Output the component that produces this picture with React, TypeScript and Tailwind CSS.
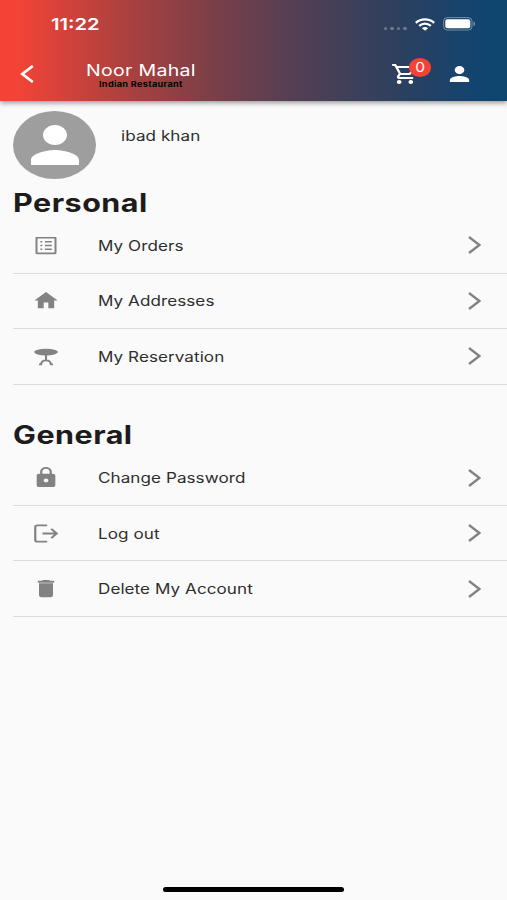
import type { ReactNode } from "react";

const PERSON =
    "M12 12c2.21 0 4-1.79 4-4s-1.79-4-4-4-4 1.79-4 4 1.79 4 4 4zm0 2c-2.67 0-8 1.34-8 4v2h16v-2c0-2.66-5.33-4-8-4z";

const PERSONAL = [
    {
        label: "My Orders",
        icon: (
            <path d="M19.3 4.7v14.6H4.7V4.7h14.6m.8-1.7H3.9c-.5 0-.9.4-.9.9v16.2c0 .4.4.9.9.9h16.2c.4 0 .9-.5.9-.9V3.9c0-.5-.5-.9-.9-.9zM11 7.2h6v1.6h-6zm0 4h6v1.6h-6zm0 4h6v1.6h-6zM7.2 7.2h1.6v1.6H7.2zm0 4h1.6v1.6H7.2zm0 4h1.6v1.6H7.2z" />
        ),
    },
    {
        label: "My Addresses",
        icon: <path d="M10 20v-6h4v6h5v-8h3L12 3 2 12h3v8z" />,
    },
    {
        label: "My Reservation",
        icon: (
            <>
                <ellipse cx="12" cy="7.4" rx="10.2" ry="3.5" />
                <path
                    d="M12 10v6M6 20.2h1.8c.2-2.5 1-4.2 4.2-4.2s4 1.7 4.2 4.2H18"
                    fill="none"
                    stroke="currentColor"
                    strokeWidth="1.8"
                />
            </>
        ),
    },
];

const GENERAL = [
    {
        label: "Change Password",
        icon: (
            <path d="M18 8h-1V6c0-2.76-2.24-5-5-5S7 3.24 7 6v2H6c-1.1 0-2 .9-2 2v10c0 1.1.9 2 2 2h12c1.1 0 2-.9 2-2V10c0-1.1-.9-2-2-2zm-6 9c-1.1 0-2-.9-2-2s.9-2 2-2 2 .9 2 2-.9 2-2 2zm3.1-9H8.9V6c0-1.71 1.39-3.1 3.1-3.1 1.71 0 3.1 1.39 3.1 3.1v2z" />
        ),
    },
    {
        label: "Log out",
        icon: (
            <path
                d="M13 3.5H4.5c-1 0-1.7.7-1.7 1.7v13.6c0 1 .7 1.7 1.7 1.7H13M9 12h12.5M16.5 7.2l4.7 4.8-4.7 4.8"
                fill="none"
                stroke="currentColor"
                strokeWidth="1.9"
            />
        ),
    },
    {
        label: "Delete My Account",
        icon: (
            <path d="M6 19c0 1.1.9 2 2 2h8c1.1 0 2-.9 2-2V6.5H6V19zM19 4h-3.5l-1-1h-5l-1 1H5v2h14V4z" />
        ),
    },
];

type Item = (typeof PERSONAL)[number];

function Wide({ className, children }: { className: string; children: ReactNode }) {
    return (
        <span className={`block w-max origin-left scale-x-[1.22] whitespace-nowrap ${className}`}>
            {children}
        </span>
    );
}

function Icon({ className, children }: { className: string; children: ReactNode }) {
    return (
        <svg
            viewBox="0 0 24 24"
            preserveAspectRatio="none"
            fill="currentColor"
            className={`shrink-0 ${className}`}
        >
            {children}
        </svg>
    );
}

function Row({ item }: { item: Item }) {
    return (
        <li className="ml-[13px] flex h-[55.5px] items-center border-b border-[#dcdcdc] pl-[19px] pr-[26px]">
            <Icon className="h-[23px] w-7 text-[#828282]">{item.icon}</Icon>
            <div className="ml-[38px] flex-1 pt-[0.8px]">
                <Wide className="text-sm tracking-[0.05px] text-[#2e2e2e]">{item.label}</Wide>
            </div>
            <svg viewBox="0 0 13 18" className="h-[18px] w-[13px] text-[#828282]">
                <path d="M1 1l10.4 8L1 17" fill="none" stroke="currentColor" strokeWidth="2.3" />
            </svg>
        </li>
    );
}

function Section({ title, items }: { title: string; items: Item[] }) {
    return (
        <section>
            <h2 className="flex h-[31px] items-end pl-[13px]">
                <Wide className="text-[25px] leading-[29px] font-bold tracking-[0.4px] text-[#1c1c1c]">
                    {title}
                </Wide>
            </h2>
            <ul>
                {items.map((item) => (
                    <Row key={item.label} item={item} />
                ))}
            </ul>
        </section>
    );
}

function StatusBar() {
    return (
        <div className="flex h-12 items-center pl-[51px] pr-[31px]">
            <div className="flex-1 pt-px">
                <Wide className="text-[16.5px] font-semibold">11:22</Wide>
            </div>
            <div className="mr-2 mt-[9px] flex gap-[3px]">
                <i className="h-[3px] w-[3.6px] rounded-full bg-white/30" />
                <i className="h-[3px] w-[3.6px] rounded-full bg-white/30" />
                <i className="h-[3px] w-[3.6px] rounded-full bg-white/30" />
                <i className="h-[3px] w-[3.6px] rounded-full bg-white/30" />
            </div>
            <svg viewBox="0 0 20 13" className="mr-2 h-[13px] w-5">
                <g fill="none" stroke="white" strokeWidth="2.3">
                    <path d="M.8 4.8C6 .2 14 .2 19.2 4.8" />
                    <path d="M4.2 7.9c3.4-3 8.2-3 11.6 0" />
                </g>
                <path d="M10 12.7 6.9 10.2c1.8-1.5 4.4-1.5 6.2 0z" fill="white" />
            </svg>
            <svg viewBox="0 0 33 14" className="h-[14px] w-[33px]">
                <rect x=".6" y=".6" width="28.4" height="12.4" rx="3.6" fill="none" stroke="white" strokeOpacity=".4" />
                <rect x="2.3" y="2.3" width="25" height="9" rx="2" fill="white" />
                <path d="M30.5 4.6c2 .6 2 4 0 4.6z" fill="white" fillOpacity=".45" />
            </svg>
        </div>
    );
}

export default function App() {
    return (
        <main className="flex h-[900px] w-[507px] flex-col overflow-hidden bg-[#fafafa] font-['Inter','Liberation_Sans',sans-serif]">
            <header className="z-10 h-[100.5px] shrink-0 bg-[linear-gradient(90deg,#f44336_0%,#f44336_3%,#b4413e_22%,#7a3f48_42%,#543f53_58%,#2c405f_79%,#0f4570_96%,#0d4670_100%)] text-white shadow-[0_2px_5px_rgba(0,0,0,0.4)]">
                <StatusBar />
                <div className="flex h-[52px] items-center pl-5">
                    <svg viewBox="0 0 14 18" className="h-[18px] w-[14px]">
                        <path d="M12.8 1 2.3 9l10.5 8" fill="none" stroke="white" strokeWidth="2.7" />
                    </svg>
                    <div className="ml-[52px] w-[305px] pt-[3px]">
                        <Wide className="text-[16px] leading-[19px] tracking-[0.25px]">Noor Mahal</Wide>
                        <div className="ml-[13px]">
                            <Wide className="text-[7.5px] leading-[10px] font-bold tracking-[0.25px] text-black">
                                Indian Restaurant
                            </Wide>
                        </div>
                    </div>
                    <div className="relative">
                        <Icon className="h-6 w-7">
                            <path d="M15.55 13c.75 0 1.41-.41 1.75-1.03l3.58-6.49A.996.996 0 0 0 20.01 4H5.21l-.94-2H1v2h2l3.6 7.59-1.35 2.44C4.52 15.37 5.48 17 7 17h12v-2H7l1.1-2h7.45zM6.16 6h12.15l-2.76 5H8.53L6.16 6zM7 18c-1.1 0-1.99.9-1.99 2S5.9 22 7 22s2-.9 2-2-.9-2-2-2zm10 0c-1.1 0-1.99.9-1.99 2s.89 2 1.99 2 2-.9 2-2-.9-2-2-2z" />
                        </Icon>
                        <span className="absolute top-[-4px] left-[18px] flex h-[19px] w-[22px] items-center justify-center rounded-[50%] bg-[#f44336] text-[13.5px]">
                            <span className="scale-x-[1.15]">0</span>
                        </span>
                    </div>
                    <Icon className="ml-[26px] h-6 w-[29px]">
                        <path d={PERSON} />
                    </Icon>
                </div>
            </header>

            <section className="flex h-[86.6px] shrink-0 pt-[10px] pl-[13px]">
                <div className="flex h-[68px] w-[83px] items-center justify-center rounded-[50%] bg-[#9e9e9e] text-white">
                    <Icon className="h-[60px] w-[72px]">
                        <path d={PERSON} />
                    </Icon>
                </div>
                <div className="ml-[25px] pt-[15px]">
                    <Wide className="text-sm tracking-[0.05px] text-[#2e2e2e]">ibad khan</Wide>
                </div>
            </section>

            <div className="flex flex-col gap-[34.9px]">
                <Section title="Personal" items={PERSONAL} />
                <Section title="General" items={GENERAL} />
            </div>

            <div className="mx-auto mt-auto mb-2 h-[5px] w-[181px] shrink-0 rounded-full bg-black" />
        </main>
    );
}
